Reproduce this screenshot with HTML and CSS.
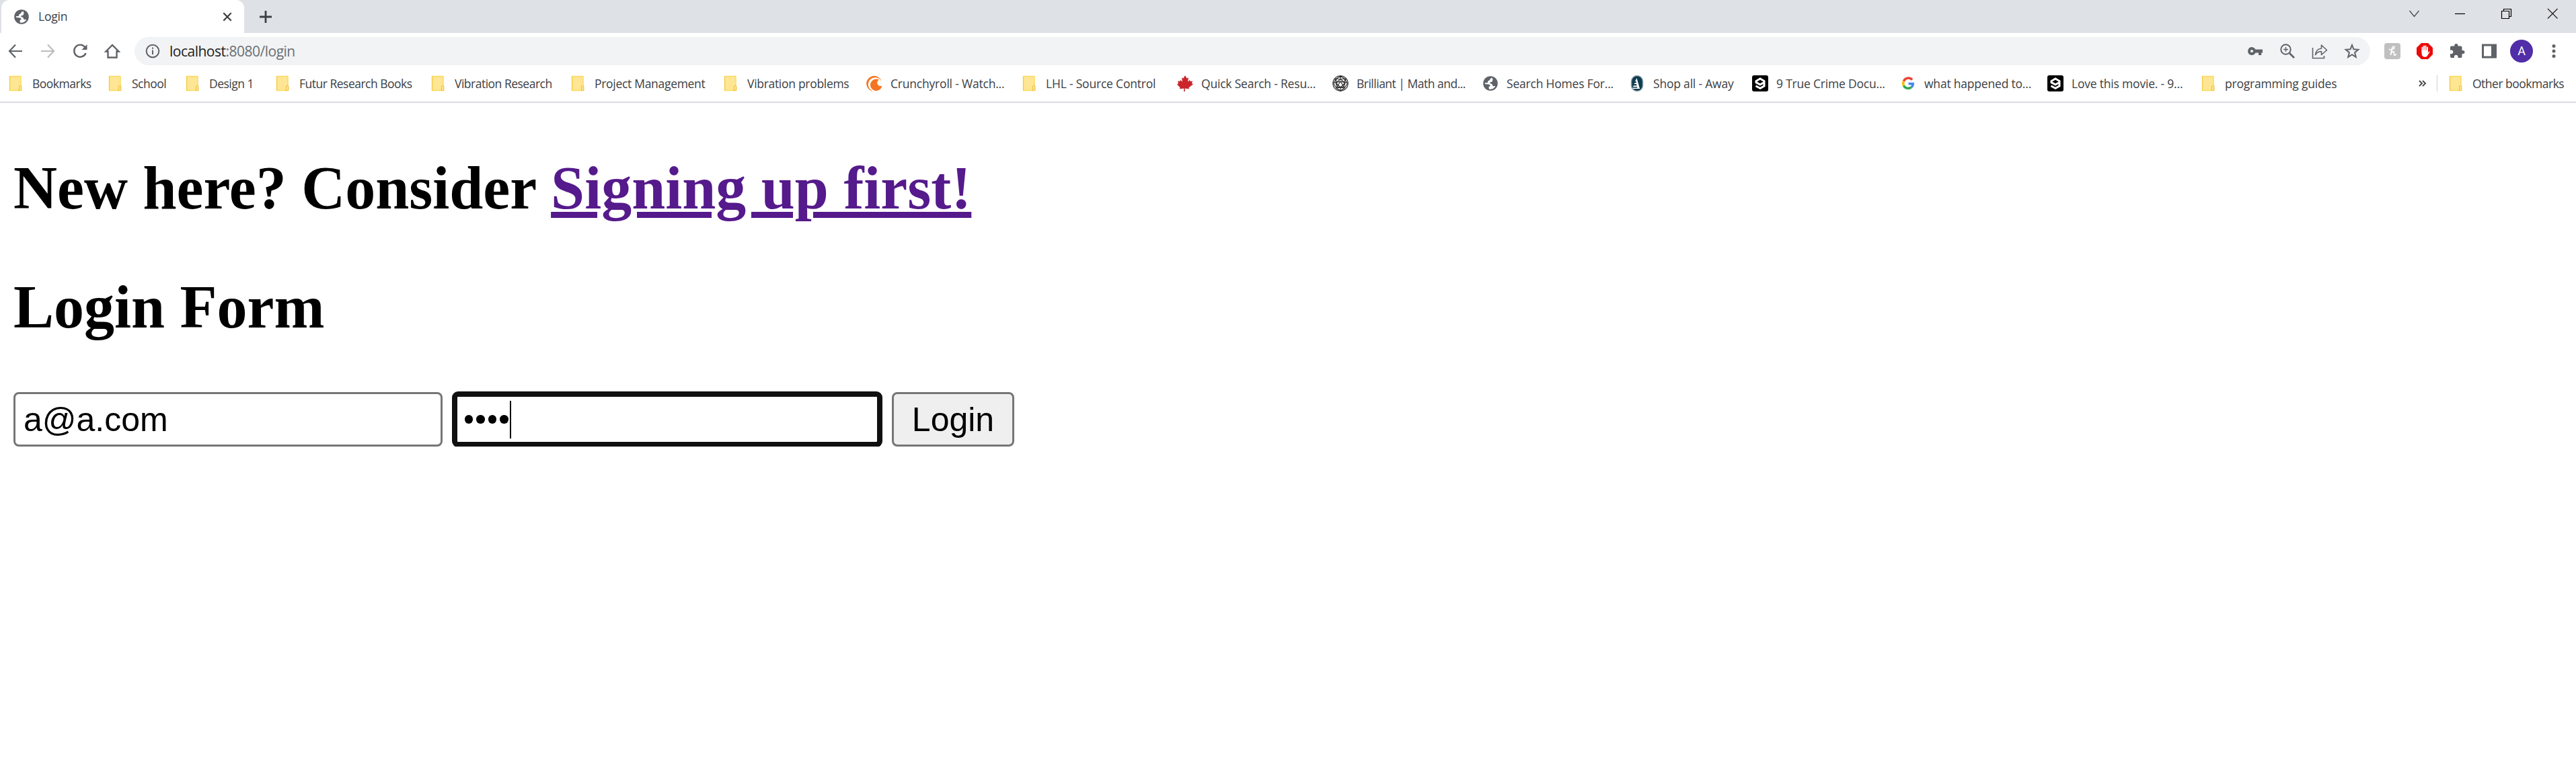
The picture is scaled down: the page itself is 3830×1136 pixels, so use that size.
FILE: index.html
```html
<!DOCTYPE html>
<html lang="en">
<head>
<meta charset="utf-8">
<title>Login</title>
<link rel="stylesheet" href="styles.css">
</head>
<body>
<svg width="0" height="0" class="defs" aria-hidden="true">
  <symbol id="folder" viewBox="0 0 24 24">
    <path d="M2.500 1.500h16.500v21h-16.500z" fill="#ffe694" stroke="#fbd95c" stroke-width="1.400"/>
    <path d="M2.600 1.500v21" stroke="#f2cb4c" stroke-width="1.200"/>
    <path d="M16.500 22.500v-5.500q0-1.500 1.700-1.500t1.700 1.500v4.500q0 1-1.400 1z" fill="#ffe694" stroke="#eec344" stroke-width="1.200"/>
  </symbol>
  <symbol id="globe" viewBox="0 0 24 24">
    <circle cx="12" cy="12" r="10.800" fill="#5f6368"/>
    <path d="M14.500 3.600c-1.500 1-3.500 1.400-3.300 3 .1 1.200-1.900.8-2.700 1.900-.6.900.2 1.800-.7 2.300-1.400.6-3 .3-4.100.2 .1 2.700 2.100 2 4.200 2.200 2 .1 3.600.5 3.700 2 .1 1.400-1.900 1-2.100 2.300-.1 1 .3 1.800.4 2.900 3.500.9 7.500-.7 9.300-4.200-1.300-.4-2.200.2-3.300-.2-1.400-.6-.6-2.400-2-3.200-1-.6-2.700-.2-2.700-1.600 0-1.500 2-.8 3.100-1.700.9-.8.4-2 1.300-2.800z" fill="#fff"/>
  </symbol>
  <symbol id="nine" viewBox="0 0 24 24">
    <rect width="24" height="24" rx="3" fill="#000"/>
    <path d="M5.500 15.800l6.500 3.500 6-3.500V8.500l-6-3.500-6 3.500v2l6 3.300 5-2.800" fill="none" stroke="#fff" stroke-width="3"/>
  </symbol>
</svg>
<header class="chrome">
  <div class="tabs">
    <div class="tab">
      <svg class="i24"><use href="#globe"/></svg>
      <span class="tab-title">Login</span>
      <svg class="i24" viewBox="0 0 24 24"><path d="M6.300 6.300l11.400 11.400M17.700 6.300L6.300 17.700" stroke="#3c4043" stroke-width="2.300"/></svg>
    </div>
    <svg class="i24 plus" viewBox="0 0 24 24"><path d="M12 3v18M3 12h18" stroke="#3c4043" stroke-width="2.800"/></svg>
    <div class="window-buttons">
      <svg viewBox="0 0 24 24"><path d="M6.500 8l7 8.500L20.500 8" fill="none" stroke="#444" stroke-width="1.200"/></svg>
      <svg viewBox="0 0 24 24"><path d="M5 12.500h15" stroke="#000" stroke-width="1.200"/></svg>
      <svg viewBox="0 0 24 24"><path d="M5.500 8.500h11v11h-11zM8.500 8V5.500h11v11H17" fill="none" stroke="#000" stroke-width="1.200"/></svg>
      <svg viewBox="0 0 24 24"><path d="M5 5l14.500 14.500M19.500 5L5 19.500" stroke="#222" stroke-width="1.300"/></svg>
    </div>
  </div>
  <div class="toolbar">
    <div class="nav">
      <svg class="i24" viewBox="0 0 24 24"><path d="M22 12H3M12 2.500L3 12l9 9.500" fill="none" stroke="#5f6368" stroke-width="2.200"/></svg>
      <svg class="i24" viewBox="0 0 24 24"><path d="M2 12h19M12 2.500l9 9.500-9 9.500" fill="none" stroke="#babcbe" stroke-width="2.200"/></svg>
      <svg class="i24" viewBox="0 0 24 24"><path d="M19.500 6.300A9 9 0 1 0 20.600 15" fill="none" stroke="#5f6368" stroke-width="2.400"/><path d="M22.500 2v8h-8z" fill="#5f6368"/></svg>
      <svg class="i24" viewBox="0 0 24 24"><path d="M2.500 12.500L12 3l9.500 9.500h-3V21.500h-13v-9z" fill="none" stroke="#5f6368" stroke-width="2.400"/></svg>
    </div>
    <div class="omnibox">
      <svg class="i24" viewBox="0 0 24 24"><circle cx="12" cy="12" r="9.300" fill="none" stroke="#5f6368" stroke-width="2"/><path d="M12 10.500v6.500M12 6.500v2.300" stroke="#5f6368" stroke-width="2"/></svg>
      <span class="url"><span class="host">localhost</span>:8080/login</span>
      <svg class="i24" viewBox="0 0 24 24"><path fill-rule="evenodd" d="M12.500 9.500A6 6 0 1 0 12.500 14.500H17V18h4.200v-3.500H23V9.500zM7 9.900a2.100 2.100 0 1 1 0 4.200 2.100 2.100 0 0 1 0-4.200z" fill="#5f6368"/></svg>
      <svg class="i24" viewBox="0 0 24 24"><circle cx="9.500" cy="9.500" r="7.200" fill="none" stroke="#5f6368" stroke-width="2"/><path d="M15 15l7 7" stroke="#5f6368" stroke-width="2.600"/><path d="M9.500 6v7M6 9.500h7" stroke="#5f6368" stroke-width="1.500"/></svg>
      <svg class="i24" viewBox="0 0 24 24"><path d="M1.500 7v15.500h17V19" fill="none" stroke="#5f6368" stroke-width="1.600"/><path d="M5.500 17.500c.6-5.500 3.500-9 9-9.500V3l8 7.500-8 7v-5c-4 0-6.700 1.500-9 5z" fill="none" stroke="#5f6368" stroke-width="1.600" stroke-linejoin="round"/></svg>
      <svg class="i24" viewBox="0 0 24 24"><path d="M12 3l2.500 6.300 6.800.5-5.200 4.400 1.700 6.700-5.800-3.700-5.800 3.700 1.700-6.700-5.200-4.400 6.800-.5z" fill="none" stroke="#5f6368" stroke-width="2"/></svg>
    </div>
    <div class="extensions">
      <svg class="i24" viewBox="0 0 24 24"><rect width="24" height="24" rx="4" fill="#c0c0c0"/><path d="M7.500 9.500c3.500 1 7.500-.5 7.500-3 0-2.200-3-1.700-3.500 1.300L9.300 18c.9-3.500 2.300-5.300 4-5.300 2.200 0 .2 4.300 1.500 5.200 1 .6 2-.2 2.400-1.200" fill="none" stroke="#fff" stroke-width="1.700" stroke-linecap="round"/></svg>
      <svg class="i24" viewBox="0 0 24 24"><path d="M7 0h10l7 7v10l-7 7H7l-7-7V7z" fill="#ea0a0a"/><path d="M8.500 13V6.500M11 12V4.500M13.500 12V4.500M16 13V6.500" stroke="#fff" stroke-width="1.900" stroke-linecap="round"/><path d="M7.600 10.500h9.300V15l1.500-2.600q1.600-.3 1 1L16 19q-1 1.700-3 1.700-5.400 0-5.400-5z" fill="#fff"/></svg>
      <svg class="i24" viewBox="0 0 24 24"><path d="M21 11H19.500V6.500q0-2-2-2H13.500V3.500a2.600 2.600 0 0 0-5.200 0v1H4Q2 4.500 2 6.500v3.900h1.500a2.800 2.800 0 0 1 0 5.600H2V20q0 2 2 2h3.900V20.500a2.800 2.800 0 0 1 5.600 0V22h4q2 0 2-2v-4H21a2.500 2.500 0 0 0 0-5z" fill="#5f6368"/></svg>
      <svg class="i24" viewBox="0 0 24 24"><path d="M2.500 3h19v18h-19z" fill="#fff" stroke="#5f6368" stroke-width="3"/><path d="M15 2h7v20h-7z" fill="#5f6368"/></svg>
      <span class="avatar">A</span>
      <svg class="i24" viewBox="0 0 24 24"><g fill="#5f6368"><circle cx="12" cy="4.500" r="2.500"/><circle cx="12" cy="12" r="2.500"/><circle cx="12" cy="19.500" r="2.500"/></g></svg>
    </div>
  </div>
  <nav class="bookmarks">
    <a><svg class="i24"><use href="#folder"/></svg><span>Bookmarks</span></a>
    <a><svg class="i24"><use href="#folder"/></svg><span>School</span></a>
    <a><svg class="i24"><use href="#folder"/></svg><span>Design 1</span></a>
    <a><svg class="i24"><use href="#folder"/></svg><span>Futur Research Books</span></a>
    <a><svg class="i24"><use href="#folder"/></svg><span>Vibration Research</span></a>
    <a class="wide"><svg class="i24"><use href="#folder"/></svg><span>Project Management</span></a>
    <a class="wide"><svg class="i24"><use href="#folder"/></svg><span>Vibration problems</span></a>
    <a class="wider"><svg class="i24" viewBox="0 0 24 24"><path d="M22.800 9.500A11.500 11.500 0 1 0 11.500 23.800 10.400 10.400 0 1 1 22.800 9.500z" fill="#f47521"/><path d="M19 6.500a8.800 8.800 0 1 0 4.500 9 3.900 3.900 0 1 1-4.500-9z" fill="#f47521"/></svg><span>Crunchyroll - Watch...</span></a>
    <a class="wider"><svg class="i24"><use href="#folder"/></svg><span>LHL - Source Control</span></a>
    <a class="wider"><svg class="i24" viewBox="0 0 24 24"><path d="M12 0l2.500 4.500 2.500-1-1 6 3-2.500 1 2 3-.5-1 3.500 2 1.200-6.500 5 .5 2-6.300-.8.2 4.600h-1.800l.2-4.600-6.300.8.500-2L0 13.200 2 12 1 8.500 4 9l1-2 3 2.500-1-6 2.500 1z" fill="#c9252b"/></svg><span>Quick Search - Resu...</span></a>
    <a><svg class="i24" viewBox="0 0 24 24"><g fill="none" stroke="#222" stroke-width="1.100"><circle cx="12" cy="12" r="11.200"/><path d="M12 1l-6 4-4.500 7L6 19l6 4 6-4 4.500-7L18 5zM6 5l6 1 6-1M6 19l6-1 6 1M12 1v5l-7 5 2 6 5 1 5-1 2-6-7-5M5 11H1.500M19 11h3.500M12 18v5M5 11l7-2 7 2-7 7zM6 5l-1 6M18 5l1 6M7 17l-1 2M17 17l1 2M12 9l-5 8M12 9l5 8M3 6l3-1M18 5l3 1"/></g></svg><span>Brilliant | Math and...</span></a>
    <a class="wider"><svg class="i24"><use href="#globe"/></svg><span>Search Homes For...</span></a>
    <a class="wider"><svg class="i24" viewBox="0 0 24 24"><rect x="3.500" y=".6" width="17" height="22.800" rx="8.500" fill="#103b50" stroke="#8da4ae" stroke-width="1.500"/><path d="M11.500 4l4.500 16H5.500v-1.500h7L12 17H6l.8-1.800h4.800L11.200 13H7.500l1-1.800H11L10.600 9H9z" fill="#fff"/></svg><span>Shop all - Away</span></a>
    <a class="wider"><svg class="i24"><use href="#nine"/></svg><span>9 True Crime Docu...</span></a>
    <a class="wider"><svg class="i24" viewBox="0 0 24 24"><g fill="none" stroke-width="3.500"><path d="M18 6.700A7.400 7.400 0 0 0 5.400 8.800" stroke="#ea4335"/><path d="M5.400 8.800a7.400 7.400 0 0 0 0 6.400" stroke="#fbbc05"/><path d="M5.400 15.200a7.400 7.400 0 0 0 11.400 2.400" stroke="#34a853"/><path d="M16.800 17.600c1.700-1.400 2.400-3.200 2.400-5.200H12.500" stroke="#4285f4"/></g></svg><span>what happened to...</span></a>
    <a class="wider"><svg class="i24"><use href="#nine"/></svg><span>Love this movie. - 9...</span></a>
    <a class="wider"><svg class="i24"><use href="#folder"/></svg><span>programming guides</span></a>
    <svg class="i24" viewBox="0 0 24 24"><path d="M7 8l4 4-4 4M12 8l4 4-4 4" fill="none" stroke="#4a4d51" stroke-width="2"/></svg>
    <a class="other"><svg class="i24"><use href="#folder"/></svg><span>Other bookmarks</span></a>
  </nav>
</header>
<main>
  <h2>New here? Consider <a class="signup">Signing up first!</a></h2>
  <h2 class="form-title">Login Form</h2>
  <form class="login">
    <div class="field">a@a.com</div>
    <div class="field focused"><i class="dot"></i><i class="dot"></i><i class="dot"></i><i class="dot"></i><i class="caret"></i></div>
    <button type="button" class="submit">Login</button>
  </form>
</main>
</body>
</html>
```
FILE: styles.css
```css
* { box-sizing: border-box; }
body { margin: 0; background: #fff; color: #000; font-family: "Liberation Serif", serif; }
.defs { position: absolute; }
.chrome { height: 153px; border-bottom: 2px solid #dadce0; font-family: "Open Sans", sans-serif; color: #3c4043; }
.i24 { width: 24px; height: 24px; flex: none; display: block; }

.tabs { height: 49px; background: #dee1e6; display: flex; align-items: center; padding-left: 2px; }
.tab { width: 361px; height: 49px; background: #fff; border-radius: 12px 12px 0 0; display: flex; align-items: center; padding: 0 13px 0 18px; }
.tab-title { flex: 1; margin-left: 13px; padding-bottom: 2px; font-size: 17.5px; letter-spacing: -.2px; }
.plus { margin-left: 20px; }
.window-buttons { margin-left: auto; display: flex; gap: 45px; padding: 0 23px 10px 0; }
.window-buttons svg { width: 24px; height: 24px; }

.toolbar { height: 54px; display: flex; align-items: center; }
.nav { display: flex; gap: 24px; padding-left: 11px; width: 200px; }
.omnibox { width: 3324px; height: 42px; border-radius: 21px; background: #f1f3f4; display: flex; align-items: center; gap: 24px; padding: 0 15px; }
.url { flex: 1; margin-left: -11px; font-size: 21px; letter-spacing: -.5px; color: #6b6f74; }
.host { color: #202124; }
.extensions { flex: 1; display: flex; align-items: center; gap: 24px; padding-left: 21px; }
.avatar { width: 34px; height: 34px; margin: 0 -5px; border-radius: 50%; background: #512da8; color: #fff; font: 18px/34px Roboto, sans-serif; text-align: center; }

.bookmarks {
  height: 42px; display: grid; align-items: center; padding-left: 12px; font-size: 17.5px;
  grid-template-columns: 148px 115px 134px 231px 208px 227px 213px 231px 231px 231px 223px 218px 183px 220px 219px 228px 318px 33px 207px;
}
.bookmarks a { display: flex; align-items: center; gap: 12px; white-space: nowrap; letter-spacing: -.5px; }
.bookmarks span { padding-bottom: 1px; }
.bookmarks .wide { letter-spacing: -.3px; }
.bookmarks .wider { letter-spacing: -.2px; }
.bookmarks .other { height: 24px; border-left: 1px solid #cfd1d4; padding-left: 16px; }

main { padding: 0 20px; }
h2 { margin: 75px 0 0; font-size: 90px; line-height: 103px; font-weight: bold; }
.form-title { margin: 74px 0 75px; }
.signup { color: #551a8b; text-decoration: underline; text-decoration-thickness: 9px; }
.login { display: flex; gap: 15px; }
.field { width: 638px; height: 81px; border: 3px solid #767676; border-radius: 8px; padding: 0 12px; display: flex; align-items: center; font: 50px "Liberation Sans", sans-serif; }
.focused { padding-left: 14.5px; outline: 8px solid #101010; outline-offset: -7px; }
.dot { width: 12.5px; height: 12.5px; border-radius: 50%; background: #000; margin-right: 5px; }
.caret { width: 2px; height: 56px; background: #000; margin-left: -3px; }
.submit { width: 182px; height: 81px; border: 3px solid #767676; border-radius: 8px; background: #efefef; padding: 0; color: #000; font: 50px "Liberation Sans", sans-serif; }
```
